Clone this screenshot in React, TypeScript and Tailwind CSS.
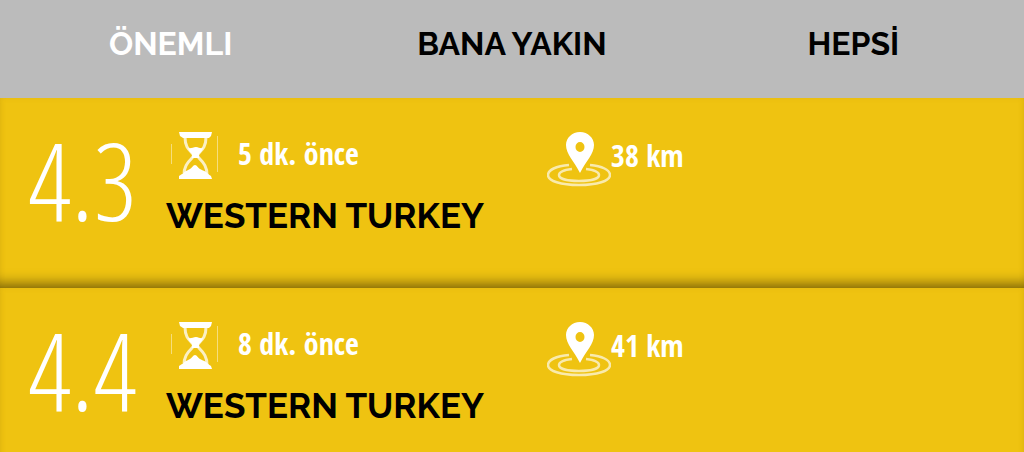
import React, { useState } from 'react';

type Quake = {
  id: number;
  magnitude: string;
  time: string;
  distance: string;
  place: string;
};

const TABS = ['ÖNEMLI', 'BANA YAKIN', 'HEPSİ'];

const QUAKES: Quake[] = [
  { id: 1, magnitude: '4.3', time: '5 dk. önce', distance: '38 km', place: 'WESTERN TURKEY' },
  { id: 2, magnitude: '4.4', time: '8 dk. önce', distance: '41 km', place: 'WESTERN TURKEY' },
];

function HourglassIcon() {
  return (
    <svg viewBox="0 0 48 48" className="w-12 h-12 shrink-0" fill="none" aria-hidden="true">
      <path d="M1.500 12v20M47.500 4v36" stroke="#fff" strokeWidth="1" opacity="0.45" />
      <path d="M9 0h33l-1 4-2 2H13l-3-2z" fill="#fff" />
      <path d="M9 47h33l-1-3-3-2H12l-3 2z" fill="#fff" />
      <path
        d="M15 5c0 9 3 12 7 16 2 2 2 3 0 5-5 5-8 9-8 17M36 5c0 9-3 12-7 16-2 2-2 3 0 5 5 5 8 9 8 17"
        stroke="#fff"
        strokeWidth="3"
        opacity="0.75"
      />
      <path d="M18 16c3 1 5-1 8-1s4 2 7 1c-1 3-2 4-4 6v4h-7v-4c-2-2-3-3-4-6z" fill="#fff" />
      <path d="M12 44c1-4 4-5 8-7 2-1 3-4 5-4s3 3 5 4c4 2 8 3 9 7z" fill="#fff" />
    </svg>
  );
}

function PinIcon() {
  return (
    <svg viewBox="0 0 64 56" className="w-16 h-14 shrink-0" fill="none" aria-hidden="true">
      <g stroke="#fff" strokeWidth="2.500" opacity="0.65">
        <path d="M22 33C9 34 1 38 1 43c0 6 13 10 31 10s31-4 31-10c0-5-8-9-20-10" />
        <path d="M25 37c-8 1-13 3-13 6 0 4 9 6 20 6s20-2 20-6c0-3-5-5-13-6" />
      </g>
      <path
        fillRule="evenodd"
        d="M33 0c8 0 14 6 14 13 0 9-8 16-14 28C27 29 19 22 19 13 19 6 25 0 33 0zm0 10a4.500 5 0 1 0 0 10 4.500 5 0 0 0 0-10z"
        fill="#fff"
      />
    </svg>
  );
}

function QuakeRow({ quake }: { quake: Quake }) {
  return (
    <li className="flex h-[190px] shrink-0 bg-[#efc311] pl-7 shadow-[inset_0_-14px_14px_-10px_rgba(0,0,0,0.5),inset_0_0_5px_rgba(190,140,0,0.15)]">
      <div className="w-[138px] shrink-0 pt-[34px] font-['Open_Sans_Condensed_Light','Open_Sans_Condensed','Open_Sans',sans-serif] text-[108px] leading-[96px] font-light text-white">
        {quake.magnitude}
      </div>
      <div className="flex-1 min-w-0 pt-[34px]">
        <div className="flex font-['Open_Sans_Condensed','Open_Sans',sans-serif] text-[30px] font-bold text-white">
          <div className="flex w-[377px] gap-5 pl-1 leading-[44px]">
            <HourglassIcon />
            <span>{quake.time}</span>
          </div>
          <div className="flex pl-1 leading-[48px]">
            <PinIcon />
            <span>{quake.distance}</span>
          </div>
        </div>
        <h2 className="mt-2 font-['Raleway','Lato',sans-serif] text-[35px] leading-[40px] font-bold text-black">
          {quake.place}
        </h2>
      </div>
    </li>
  );
}

export default function App() {
  const [activeTab, setActiveTab] = useState(0);

  return (
    <div className="flex h-screen flex-col overflow-hidden bg-[#efc311]">
      <nav className="grid shrink-0 grid-cols-3 bg-[#bbbbbb]">
        {TABS.map((tab, index) => (
          <button
            key={tab}
            onClick={() => setActiveTab(index)}
            className={`pt-6 pb-[34px] font-['Raleway','Lato',sans-serif] text-[32px] leading-[40px] font-bold ${
              index === activeTab ? 'text-white' : 'text-black'
            }`}
          >
            {tab}
          </button>
        ))}
      </nav>

      <ul className="flex flex-col">
        {QUAKES.map(quake => (
          <QuakeRow key={quake.id} quake={quake} />
        ))}
      </ul>
    </div>
  );
}
